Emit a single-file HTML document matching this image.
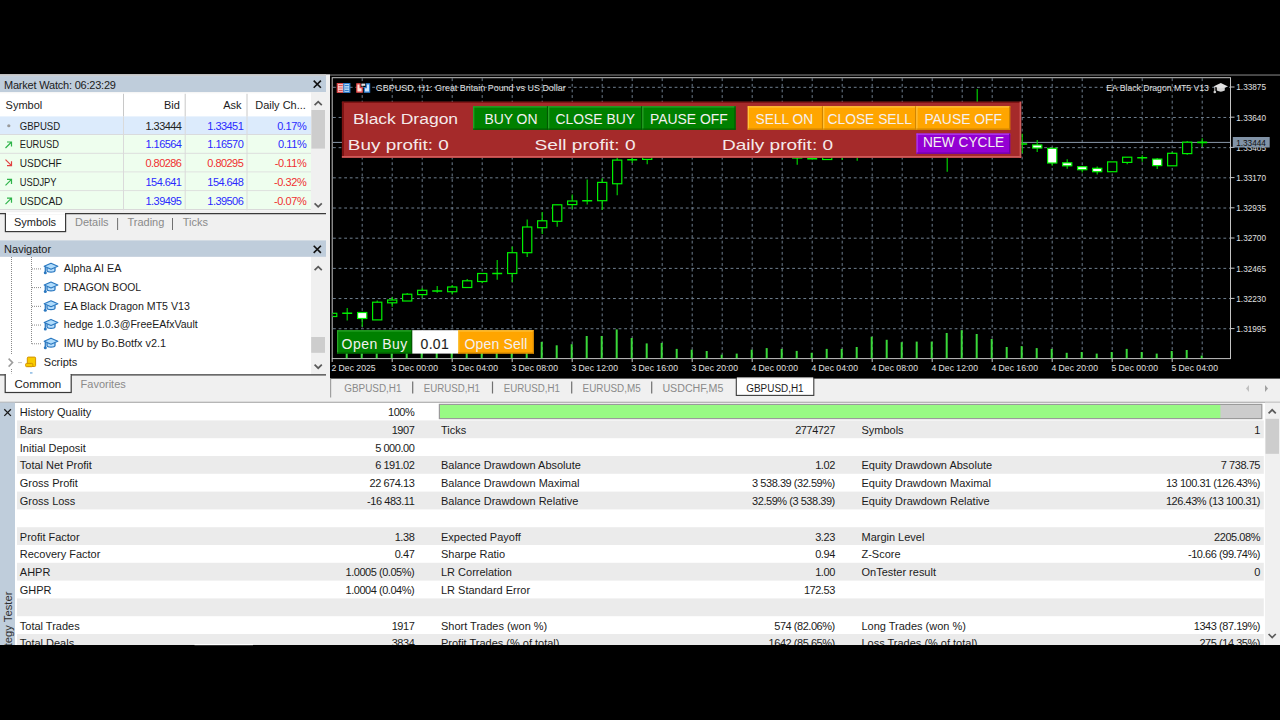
<!DOCTYPE html><html><head><meta charset="utf-8"><title>MT5</title><style>html,body{margin:0;padding:0;background:#000;overflow:hidden;width:1280px;height:720px}svg{display:block}</style></head><body>
<svg width="1280" height="720" viewBox="0 0 1280 720" font-family='"Liberation Sans", sans-serif' style="white-space:pre">
<rect x="0.00" y="0.00" width="1280.00" height="720.00" fill="#000" />
<rect x="0.00" y="74.30" width="330.00" height="326.70" fill="#f0f0f0" />
<rect x="0.00" y="74.30" width="326.00" height="1.80" fill="#c9cbcd" />
<rect x="0.00" y="76.10" width="326.00" height="15.90" fill="#bfcddb" />
<text transform="translate(4.00,88.60) scale(0.932,1)" x="0" y="0" font-size="11.8" fill="#202020" letter-spacing="-0.215" >Market Watch: 06:23:29</text>
<path d="M313.70,80.60 L320.90,87.80 M320.90,80.60 L313.70,87.80" stroke="#111111" stroke-width="1.6"/>
<rect x="0.00" y="92.00" width="311.00" height="118.30" fill="#ffffff" />
<rect x="0.00" y="92.00" width="326.00" height="1.30" fill="#f6f6f6" />
<text transform="translate(5.60,108.70) scale(0.932,1)" x="0" y="0" font-size="11.8" fill="#1b1b1b" >Symbol</text>
<text transform="translate(179.80,108.70) scale(0.932,1)" x="0" y="0" font-size="11.8" fill="#1b1b1b" text-anchor="end" >Bid</text>
<text transform="translate(241.60,108.70) scale(0.932,1)" x="0" y="0" font-size="11.8" fill="#1b1b1b" text-anchor="end" >Ask</text>
<text transform="translate(255.20,108.70) scale(0.932,1)" x="0" y="0" font-size="11.8" fill="#1b1b1b" >Daily Ch...</text>
<rect x="0.00" y="116.40" width="311.00" height="18.72" fill="#dcebfc" />
<line x1="0.00" y1="134.62" x2="311.00" y2="134.62" stroke="#d9d9d9" stroke-width="1" />
<text x="19.70" y="129.70" font-size="11.8" fill="#1b1b1b" textLength="40.5" lengthAdjust="spacingAndGlyphs" >GBPUSD</text>
<text transform="translate(181.40,129.70) scale(0.932,1)" x="0" y="0" font-size="11.8" fill="#222222" text-anchor="end" letter-spacing="-0.59" >1.33444</text>
<text transform="translate(243.20,129.70) scale(0.932,1)" x="0" y="0" font-size="11.8" fill="#2a2aff" text-anchor="end" letter-spacing="-0.59" >1.33451</text>
<text transform="translate(306.30,129.70) scale(0.932,1)" x="0" y="0" font-size="11.8" fill="#2a2aff" text-anchor="end" letter-spacing="-0.429" >0.17%</text>
<circle cx="8.8" cy="125.76" r="1.6" fill="#9a9a9a"/>
<rect x="0.00" y="135.12" width="311.00" height="18.72" fill="#eefeee" />
<line x1="0.00" y1="153.34" x2="311.00" y2="153.34" stroke="#d9d9d9" stroke-width="1" />
<text x="19.70" y="148.42" font-size="11.8" fill="#1b1b1b" textLength="39.3" lengthAdjust="spacingAndGlyphs" >EURUSD</text>
<text transform="translate(181.40,148.42) scale(0.932,1)" x="0" y="0" font-size="11.8" fill="#2a2aff" text-anchor="end" letter-spacing="-0.59" >1.16564</text>
<text transform="translate(243.20,148.42) scale(0.932,1)" x="0" y="0" font-size="11.8" fill="#2a2aff" text-anchor="end" letter-spacing="-0.59" >1.16570</text>
<text transform="translate(306.30,148.42) scale(0.932,1)" x="0" y="0" font-size="11.8" fill="#2a2aff" text-anchor="end" letter-spacing="-0.429" >0.11%</text>
<path d="M5.5,147.98 L11.5,141.98 M7,141.98 L11.5,141.98 L11.5,146.48" fill="none" stroke="#2fb44a" stroke-width="1.2"/>
<rect x="0.00" y="153.84" width="311.00" height="18.72" fill="#eefeee" />
<line x1="0.00" y1="172.06" x2="311.00" y2="172.06" stroke="#d9d9d9" stroke-width="1" />
<text x="19.70" y="167.14" font-size="11.8" fill="#1b1b1b" textLength="42" lengthAdjust="spacingAndGlyphs" >USDCHF</text>
<text transform="translate(181.40,167.14) scale(0.932,1)" x="0" y="0" font-size="11.8" fill="#f03030" text-anchor="end" letter-spacing="-0.59" >0.80286</text>
<text transform="translate(243.20,167.14) scale(0.932,1)" x="0" y="0" font-size="11.8" fill="#f03030" text-anchor="end" letter-spacing="-0.59" >0.80295</text>
<text transform="translate(306.30,167.14) scale(0.932,1)" x="0" y="0" font-size="11.8" fill="#f03030" text-anchor="end" letter-spacing="-0.429" >-0.11%</text>
<path d="M5.5,159.70 L11.5,165.70 M7,165.70 L11.5,165.70 L11.5,161.20" fill="none" stroke="#e04040" stroke-width="1.2"/>
<rect x="0.00" y="172.56" width="311.00" height="18.72" fill="#eefeee" />
<line x1="0.00" y1="190.78" x2="311.00" y2="190.78" stroke="#d9d9d9" stroke-width="1" />
<text x="19.70" y="185.86" font-size="11.8" fill="#1b1b1b" textLength="36.8" lengthAdjust="spacingAndGlyphs" >USDJPY</text>
<text transform="translate(181.40,185.86) scale(0.932,1)" x="0" y="0" font-size="11.8" fill="#2a2aff" text-anchor="end" letter-spacing="-0.59" >154.641</text>
<text transform="translate(243.20,185.86) scale(0.932,1)" x="0" y="0" font-size="11.8" fill="#2a2aff" text-anchor="end" letter-spacing="-0.59" >154.648</text>
<text transform="translate(306.30,185.86) scale(0.932,1)" x="0" y="0" font-size="11.8" fill="#f03030" text-anchor="end" letter-spacing="-0.429" >-0.32%</text>
<path d="M5.5,185.42 L11.5,179.42 M7,179.42 L11.5,179.42 L11.5,183.92" fill="none" stroke="#2fb44a" stroke-width="1.2"/>
<rect x="0.00" y="191.28" width="311.00" height="18.72" fill="#eefeee" />
<line x1="0.00" y1="209.50" x2="311.00" y2="209.50" stroke="#d9d9d9" stroke-width="1" />
<text x="19.70" y="204.58" font-size="11.8" fill="#1b1b1b" textLength="42.8" lengthAdjust="spacingAndGlyphs" >USDCAD</text>
<text transform="translate(181.40,204.58) scale(0.932,1)" x="0" y="0" font-size="11.8" fill="#2a2aff" text-anchor="end" letter-spacing="-0.59" >1.39495</text>
<text transform="translate(243.20,204.58) scale(0.932,1)" x="0" y="0" font-size="11.8" fill="#2a2aff" text-anchor="end" letter-spacing="-0.59" >1.39506</text>
<text transform="translate(306.30,204.58) scale(0.932,1)" x="0" y="0" font-size="11.8" fill="#f03030" text-anchor="end" letter-spacing="-0.429" >-0.07%</text>
<path d="M5.5,204.14 L11.5,198.14 M7,198.14 L11.5,198.14 L11.5,202.64" fill="none" stroke="#2fb44a" stroke-width="1.2"/>
<line x1="123.50" y1="93.80" x2="123.50" y2="116.40" stroke="#c8c8c8" stroke-width="1" />
<line x1="123.50" y1="116.40" x2="123.50" y2="210.30" stroke="#dadada" stroke-width="1" />
<line x1="185.20" y1="93.80" x2="185.20" y2="116.40" stroke="#c8c8c8" stroke-width="1" />
<line x1="185.20" y1="116.40" x2="185.20" y2="210.30" stroke="#dadada" stroke-width="1" />
<line x1="247.00" y1="93.80" x2="247.00" y2="116.40" stroke="#c8c8c8" stroke-width="1" />
<line x1="247.00" y1="116.40" x2="247.00" y2="210.30" stroke="#dadada" stroke-width="1" />
<rect x="311.00" y="92.00" width="15.00" height="118.30" fill="#f0f0f0" />
<rect x="311.40" y="110.00" width="13.60" height="38.60" fill="#cdcdcd" />
<path d="M314.60,105.20 L318.20,101.60 L321.80,105.20" fill="none" stroke="#5a5a5a" stroke-width="1.7"/>
<path d="M314.60,203.30 L318.20,206.90 L321.80,203.30" fill="none" stroke="#5a5a5a" stroke-width="1.7"/>
<line x1="0.00" y1="213.60" x2="326.00" y2="213.60" stroke="#3a3a3a" stroke-width="1.2" />
<rect x="5.40" y="213.60" width="60.20" height="18.00" fill="#ffffff" stroke="#3a3a3a" stroke-width="1.2"/>
<rect x="6.00" y="212.20" width="59.00" height="2.60" fill="#ffffff" />
<text transform="translate(14.00,226.10) scale(0.932,1)" x="0" y="0" font-size="11.8" fill="#1b1b1b" >Symbols</text>
<text transform="translate(75.00,226.10) scale(0.932,1)" x="0" y="0" font-size="11.8" fill="#8a8a8a" >Details</text>
<text transform="translate(127.50,226.10) scale(0.932,1)" x="0" y="0" font-size="11.8" fill="#8a8a8a" >Trading</text>
<text transform="translate(182.80,226.10) scale(0.932,1)" x="0" y="0" font-size="11.8" fill="#8a8a8a" >Ticks</text>
<line x1="117.60" y1="218.00" x2="117.60" y2="230.00" stroke="#707070" stroke-width="1" />
<line x1="172.50" y1="218.00" x2="172.50" y2="230.00" stroke="#707070" stroke-width="1" />
<rect x="0.00" y="240.40" width="326.00" height="16.50" fill="#bfcddb" />
<text transform="translate(4.10,252.90) scale(0.932,1)" x="0" y="0" font-size="11.8" fill="#202020" >Navigator</text>
<path d="M313.70,245.70 L320.90,252.90 M320.90,245.70 L313.70,252.90" stroke="#111111" stroke-width="1.6"/>
<rect x="0.00" y="256.90" width="311.00" height="117.70" fill="#ffffff" />
<rect x="311.00" y="256.90" width="15.00" height="117.70" fill="#f0f0f0" />
<rect x="311.20" y="337.00" width="13.80" height="15.80" fill="#cdcdcd" />
<path d="M314.60,270.20 L318.20,266.60 L321.80,270.20" fill="none" stroke="#5a5a5a" stroke-width="1.7"/>
<path d="M314.60,364.60 L318.20,368.20 L321.80,364.60" fill="none" stroke="#5a5a5a" stroke-width="1.7"/>
<g stroke="#8a8a8a" stroke-width="1" stroke-dasharray="1 1">
<line x1="11.50" y1="257.00" x2="11.50" y2="354.00" />
<line x1="11.50" y1="369.00" x2="11.50" y2="374.50" />
<line x1="31.50" y1="257.00" x2="31.50" y2="343.80" />
<line x1="32.00" y1="268.90" x2="41.50" y2="268.90" />
<line x1="32.00" y1="287.62" x2="41.50" y2="287.62" />
<line x1="32.00" y1="306.34" x2="41.50" y2="306.34" />
<line x1="32.00" y1="325.06" x2="41.50" y2="325.06" />
<line x1="32.00" y1="343.78" x2="41.50" y2="343.78" />
<line x1="18.50" y1="362.60" x2="22.50" y2="362.60" />
</g>
<g transform="translate(51,268.90)"><path d="M-4,-1.2 L-4,1.6 Q-4,3.3 0,3.3 Q4,3.3 4,1.6 L4,-1.2" fill="#b8defc" stroke="#2a78c0" stroke-width="1.3"/><path d="M-6.8,-2.6 L0,-5.6 L6.8,-2.6 L0,0.4 Z" fill="#b0dcfc" stroke="#2a78c0" stroke-width="1.2" stroke-linejoin="round"/><path d="M-5.7,-2.4 L-5.7,3.4" stroke="#2a78c0" stroke-width="1.3"/><circle cx="-5.7" cy="3.9" r="1.5" fill="#2a78c0"/></g>
<text x="63.80" y="272.30" font-size="11.8" fill="#1b1b1b" textLength="57.7" lengthAdjust="spacingAndGlyphs" >Alpha AI EA</text>
<g transform="translate(51,287.62)"><path d="M-4,-1.2 L-4,1.6 Q-4,3.3 0,3.3 Q4,3.3 4,1.6 L4,-1.2" fill="#b8defc" stroke="#2a78c0" stroke-width="1.3"/><path d="M-6.8,-2.6 L0,-5.6 L6.8,-2.6 L0,0.4 Z" fill="#b0dcfc" stroke="#2a78c0" stroke-width="1.2" stroke-linejoin="round"/><path d="M-5.7,-2.4 L-5.7,3.4" stroke="#2a78c0" stroke-width="1.3"/><circle cx="-5.7" cy="3.9" r="1.5" fill="#2a78c0"/></g>
<text x="63.80" y="291.02" font-size="11.8" fill="#1b1b1b" textLength="77.3" lengthAdjust="spacingAndGlyphs" >DRAGON BOOL</text>
<g transform="translate(51,306.34)"><path d="M-4,-1.2 L-4,1.6 Q-4,3.3 0,3.3 Q4,3.3 4,1.6 L4,-1.2" fill="#b8defc" stroke="#2a78c0" stroke-width="1.3"/><path d="M-6.8,-2.6 L0,-5.6 L6.8,-2.6 L0,0.4 Z" fill="#b0dcfc" stroke="#2a78c0" stroke-width="1.2" stroke-linejoin="round"/><path d="M-5.7,-2.4 L-5.7,3.4" stroke="#2a78c0" stroke-width="1.3"/><circle cx="-5.7" cy="3.9" r="1.5" fill="#2a78c0"/></g>
<text x="63.80" y="309.74" font-size="11.8" fill="#1b1b1b" textLength="126" lengthAdjust="spacingAndGlyphs" >EA Black Dragon MT5 V13</text>
<g transform="translate(51,325.06)"><path d="M-4,-1.2 L-4,1.6 Q-4,3.3 0,3.3 Q4,3.3 4,1.6 L4,-1.2" fill="#b8defc" stroke="#2a78c0" stroke-width="1.3"/><path d="M-6.8,-2.6 L0,-5.6 L6.8,-2.6 L0,0.4 Z" fill="#b0dcfc" stroke="#2a78c0" stroke-width="1.2" stroke-linejoin="round"/><path d="M-5.7,-2.4 L-5.7,3.4" stroke="#2a78c0" stroke-width="1.3"/><circle cx="-5.7" cy="3.9" r="1.5" fill="#2a78c0"/></g>
<text x="63.80" y="328.46" font-size="11.8" fill="#1b1b1b" textLength="134" lengthAdjust="spacingAndGlyphs" >hedge 1.0.3@FreeEAfxVault</text>
<g transform="translate(51,343.78)"><path d="M-4,-1.2 L-4,1.6 Q-4,3.3 0,3.3 Q4,3.3 4,1.6 L4,-1.2" fill="#b8defc" stroke="#2a78c0" stroke-width="1.3"/><path d="M-6.8,-2.6 L0,-5.6 L6.8,-2.6 L0,0.4 Z" fill="#b0dcfc" stroke="#2a78c0" stroke-width="1.2" stroke-linejoin="round"/><path d="M-5.7,-2.4 L-5.7,3.4" stroke="#2a78c0" stroke-width="1.3"/><circle cx="-5.7" cy="3.9" r="1.5" fill="#2a78c0"/></g>
<text x="63.80" y="347.18" font-size="11.8" fill="#1b1b1b" textLength="102.3" lengthAdjust="spacingAndGlyphs" >IMU by Bo.Botfx v2.1</text>
<path d="M8.6,358.6 L12.6,362.6 L8.6,366.6" fill="none" stroke="#9c9c9c" stroke-width="1.5"/>
<rect x="27.3" y="357.1" width="8.3" height="9.4" rx="1" fill="#f8cc00" stroke="#d39200" stroke-width="1"/>
<rect x="25.6" y="363.4" width="7.2" height="3.3" rx="1" fill="#f8cc00" stroke="#d39200" stroke-width="1"/>
<text transform="translate(43.80,365.90) scale(0.932,1)" x="0" y="0" font-size="11.8" fill="#1b1b1b" >Scripts</text>
<rect x="30.00" y="372.50" width="2.50" height="1.50" fill="#3a8ad0" />
<line x1="0.00" y1="374.80" x2="326.00" y2="374.80" stroke="#3a3a3a" stroke-width="1.2" />
<rect x="5.20" y="374.80" width="66.00" height="17.70" fill="#ffffff" stroke="#3a3a3a" stroke-width="1.2"/>
<rect x="5.90" y="373.40" width="64.60" height="2.60" fill="#ffffff" />
<text x="14.40" y="387.50" font-size="11.8" fill="#1b1b1b" textLength="46.9" lengthAdjust="spacingAndGlyphs" >Common</text>
<text transform="translate(80.60,387.50) scale(0.932,1)" x="0" y="0" font-size="11.8" fill="#8a8a8a" >Favorites</text>
<rect x="330.00" y="75.30" width="950.00" height="303.30" fill="#000000" />
<rect x="330.00" y="74.10" width="950.00" height="1.90" fill="#4a4a4a" />
<g stroke="#6f7f8f" stroke-width="1" stroke-dasharray="2.8 2.8">
<line x1="362.20" y1="78.30" x2="362.20" y2="358.30" />
<line x1="392.20" y1="78.30" x2="392.20" y2="358.30" />
<line x1="422.20" y1="78.30" x2="422.20" y2="358.30" />
<line x1="452.20" y1="78.30" x2="452.20" y2="358.30" />
<line x1="482.20" y1="78.30" x2="482.20" y2="358.30" />
<line x1="512.20" y1="78.30" x2="512.20" y2="358.30" />
<line x1="542.20" y1="78.30" x2="542.20" y2="358.30" />
<line x1="572.20" y1="78.30" x2="572.20" y2="358.30" />
<line x1="602.20" y1="78.30" x2="602.20" y2="358.30" />
<line x1="632.20" y1="78.30" x2="632.20" y2="358.30" />
<line x1="662.20" y1="78.30" x2="662.20" y2="358.30" />
<line x1="692.20" y1="78.30" x2="692.20" y2="358.30" />
<line x1="722.20" y1="78.30" x2="722.20" y2="358.30" />
<line x1="752.20" y1="78.30" x2="752.20" y2="358.30" />
<line x1="782.20" y1="78.30" x2="782.20" y2="358.30" />
<line x1="812.20" y1="78.30" x2="812.20" y2="358.30" />
<line x1="842.20" y1="78.30" x2="842.20" y2="358.30" />
<line x1="872.20" y1="78.30" x2="872.20" y2="358.30" />
<line x1="902.20" y1="78.30" x2="902.20" y2="358.30" />
<line x1="932.20" y1="78.30" x2="932.20" y2="358.30" />
<line x1="962.20" y1="78.30" x2="962.20" y2="358.30" />
<line x1="992.20" y1="78.30" x2="992.20" y2="358.30" />
<line x1="1022.20" y1="78.30" x2="1022.20" y2="358.30" />
<line x1="1052.20" y1="78.30" x2="1052.20" y2="358.30" />
<line x1="1082.20" y1="78.30" x2="1082.20" y2="358.30" />
<line x1="1112.20" y1="78.30" x2="1112.20" y2="358.30" />
<line x1="1142.20" y1="78.30" x2="1142.20" y2="358.30" />
<line x1="1172.20" y1="78.30" x2="1172.20" y2="358.30" />
<line x1="1202.20" y1="78.30" x2="1202.20" y2="358.30" />
<line x1="333.00" y1="87.30" x2="1230.00" y2="87.30" />
<line x1="333.00" y1="117.48" x2="1230.00" y2="117.48" />
<line x1="333.00" y1="147.66" x2="1230.00" y2="147.66" />
<line x1="333.00" y1="177.84" x2="1230.00" y2="177.84" />
<line x1="333.00" y1="208.02" x2="1230.00" y2="208.02" />
<line x1="333.00" y1="238.20" x2="1230.00" y2="238.20" />
<line x1="333.00" y1="268.38" x2="1230.00" y2="268.38" />
<line x1="333.00" y1="298.56" x2="1230.00" y2="298.56" />
<line x1="333.00" y1="328.74" x2="1230.00" y2="328.74" />
</g>
<line x1="333.00" y1="142.40" x2="1230.50" y2="142.40" stroke="#8a9aac" stroke-width="1" />
<rect x="332.2" y="77.7" width="898.3" height="280.9" fill="none" stroke="#c4c4c4" stroke-width="1"/>
<rect x="345.70" y="350.00" width="2.00" height="8.20" fill="#3ad83a" />
<rect x="360.70" y="350.00" width="2.00" height="8.20" fill="#3ad83a" />
<rect x="375.70" y="350.00" width="2.00" height="8.20" fill="#3ad83a" />
<rect x="390.70" y="350.00" width="2.00" height="8.20" fill="#3ad83a" />
<rect x="405.70" y="350.00" width="2.00" height="8.20" fill="#3ad83a" />
<rect x="420.70" y="350.00" width="2.00" height="8.20" fill="#3ad83a" />
<rect x="435.70" y="350.00" width="2.00" height="8.20" fill="#3ad83a" />
<rect x="450.70" y="350.00" width="2.00" height="8.20" fill="#3ad83a" />
<rect x="465.70" y="350.00" width="2.00" height="8.20" fill="#3ad83a" />
<rect x="480.70" y="350.00" width="2.00" height="8.20" fill="#3ad83a" />
<rect x="495.70" y="350.00" width="2.00" height="8.20" fill="#3ad83a" />
<rect x="510.70" y="350.00" width="2.00" height="8.20" fill="#3ad83a" />
<rect x="525.70" y="350.00" width="2.00" height="8.20" fill="#3ad83a" />
<rect x="540.70" y="341.90" width="2.00" height="16.30" fill="#3ad83a" />
<rect x="555.70" y="345.30" width="2.00" height="12.90" fill="#3ad83a" />
<rect x="570.70" y="344.20" width="2.00" height="14.00" fill="#3ad83a" />
<rect x="585.70" y="336.00" width="2.00" height="22.20" fill="#3ad83a" />
<rect x="600.70" y="336.00" width="2.00" height="22.20" fill="#3ad83a" />
<rect x="615.70" y="329.40" width="2.00" height="28.80" fill="#3ad83a" />
<rect x="630.70" y="338.00" width="2.00" height="20.20" fill="#3ad83a" />
<rect x="645.70" y="343.40" width="2.00" height="14.80" fill="#3ad83a" />
<rect x="660.70" y="343.00" width="2.00" height="15.20" fill="#3ad83a" />
<rect x="675.70" y="348.90" width="2.00" height="9.30" fill="#3ad83a" />
<rect x="690.70" y="349.70" width="2.00" height="8.50" fill="#3ad83a" />
<rect x="705.70" y="351.00" width="2.00" height="7.20" fill="#3ad83a" />
<rect x="720.70" y="354.70" width="2.00" height="3.50" fill="#3ad83a" />
<rect x="735.70" y="353.60" width="2.00" height="4.60" fill="#3ad83a" />
<rect x="750.70" y="349.70" width="2.00" height="8.50" fill="#3ad83a" />
<rect x="765.70" y="348.10" width="2.00" height="10.10" fill="#3ad83a" />
<rect x="780.70" y="348.90" width="2.00" height="9.30" fill="#3ad83a" />
<rect x="795.70" y="350.90" width="2.00" height="7.30" fill="#3ad83a" />
<rect x="810.70" y="352.80" width="2.00" height="5.40" fill="#3ad83a" />
<rect x="825.70" y="348.90" width="2.00" height="9.30" fill="#3ad83a" />
<rect x="840.70" y="348.90" width="2.00" height="9.30" fill="#3ad83a" />
<rect x="855.70" y="347.00" width="2.00" height="11.20" fill="#3ad83a" />
<rect x="870.70" y="336.70" width="2.00" height="21.50" fill="#3ad83a" />
<rect x="885.70" y="339.80" width="2.00" height="18.40" fill="#3ad83a" />
<rect x="900.70" y="342.20" width="2.00" height="16.00" fill="#3ad83a" />
<rect x="915.70" y="341.60" width="2.00" height="16.60" fill="#3ad83a" />
<rect x="930.70" y="341.60" width="2.00" height="16.60" fill="#3ad83a" />
<rect x="945.70" y="333.00" width="2.00" height="25.20" fill="#3ad83a" />
<rect x="960.70" y="330.20" width="2.00" height="28.00" fill="#3ad83a" />
<rect x="975.70" y="334.00" width="2.00" height="24.20" fill="#3ad83a" />
<rect x="990.70" y="339.00" width="2.00" height="19.20" fill="#3ad83a" />
<rect x="1005.70" y="347.00" width="2.00" height="11.20" fill="#3ad83a" />
<rect x="1020.70" y="346.10" width="2.00" height="12.10" fill="#3ad83a" />
<rect x="1035.70" y="348.10" width="2.00" height="10.10" fill="#3ad83a" />
<rect x="1050.70" y="348.90" width="2.00" height="9.30" fill="#3ad83a" />
<rect x="1065.70" y="352.80" width="2.00" height="5.40" fill="#3ad83a" />
<rect x="1080.70" y="352.00" width="2.00" height="6.20" fill="#3ad83a" />
<rect x="1095.70" y="353.60" width="2.00" height="4.60" fill="#3ad83a" />
<rect x="1110.70" y="352.00" width="2.00" height="6.20" fill="#3ad83a" />
<rect x="1125.70" y="348.90" width="2.00" height="9.30" fill="#3ad83a" />
<rect x="1140.70" y="352.00" width="2.00" height="6.20" fill="#3ad83a" />
<rect x="1155.70" y="353.60" width="2.00" height="4.60" fill="#3ad83a" />
<rect x="1170.70" y="351.00" width="2.00" height="7.20" fill="#3ad83a" />
<rect x="1185.70" y="350.00" width="2.00" height="8.20" fill="#3ad83a" />
<rect x="1200.70" y="355.60" width="2.00" height="2.60" fill="#3ad83a" />
<defs><clipPath id="cc"><rect x="332.7" y="78.2" width="897.3" height="280"/></clipPath></defs><g clip-path="url(#cc)">
<line x1="332.20" y1="313.30" x2="332.20" y2="316.50" stroke="#00e000" stroke-width="1.1" />
<rect x="327.60" y="313.30" width="9.2" height="3.20" fill="#000" stroke="#00f000" stroke-width="1.2"/>
<line x1="347.20" y1="308.00" x2="347.20" y2="320.50" stroke="#00e000" stroke-width="1.1" />
<line x1="342.20" y1="313.30" x2="352.20" y2="313.30" stroke="#00f000" stroke-width="1.6" />
<line x1="362.20" y1="312.00" x2="362.20" y2="326.80" stroke="#00e000" stroke-width="1.1" />
<rect x="357.60" y="312.50" width="9.2" height="6.00" fill="#fff" stroke="#00f000" stroke-width="1.2"/>
<line x1="377.20" y1="300.40" x2="377.20" y2="319.90" stroke="#00e000" stroke-width="1.1" />
<rect x="372.60" y="302.20" width="9.2" height="17.70" fill="#000" stroke="#00f000" stroke-width="1.2"/>
<line x1="392.20" y1="297.00" x2="392.20" y2="306.70" stroke="#00e000" stroke-width="1.1" />
<rect x="387.60" y="300.00" width="9.2" height="2.80" fill="#000" stroke="#00f000" stroke-width="1.2"/>
<line x1="407.20" y1="293.00" x2="407.20" y2="301.00" stroke="#00e000" stroke-width="1.1" />
<rect x="402.60" y="294.20" width="9.2" height="6.80" fill="#000" stroke="#00f000" stroke-width="1.2"/>
<line x1="422.20" y1="288.00" x2="422.20" y2="297.60" stroke="#00e000" stroke-width="1.1" />
<rect x="417.60" y="290.30" width="9.2" height="4.30" fill="#000" stroke="#00f000" stroke-width="1.2"/>
<line x1="437.20" y1="286.00" x2="437.20" y2="292.80" stroke="#00e000" stroke-width="1.1" />
<line x1="432.20" y1="291.00" x2="442.20" y2="291.00" stroke="#00f000" stroke-width="1.6" />
<line x1="452.20" y1="285.00" x2="452.20" y2="294.40" stroke="#00e000" stroke-width="1.1" />
<rect x="447.60" y="287.00" width="9.2" height="4.70" fill="#000" stroke="#00f000" stroke-width="1.2"/>
<line x1="467.20" y1="279.00" x2="467.20" y2="287.50" stroke="#00e000" stroke-width="1.1" />
<rect x="462.60" y="280.80" width="9.2" height="6.70" fill="#000" stroke="#00f000" stroke-width="1.2"/>
<line x1="482.20" y1="273.50" x2="482.20" y2="283.30" stroke="#00e000" stroke-width="1.1" />
<rect x="477.60" y="273.50" width="9.2" height="8.00" fill="#000" stroke="#00f000" stroke-width="1.2"/>
<line x1="497.20" y1="260.00" x2="497.20" y2="279.80" stroke="#00e000" stroke-width="1.1" />
<line x1="492.20" y1="273.50" x2="502.20" y2="273.50" stroke="#00f000" stroke-width="1.6" />
<line x1="512.20" y1="246.50" x2="512.20" y2="281.90" stroke="#00e000" stroke-width="1.1" />
<rect x="507.60" y="252.70" width="9.2" height="20.80" fill="#000" stroke="#00f000" stroke-width="1.2"/>
<line x1="527.20" y1="219.40" x2="527.20" y2="256.90" stroke="#00e000" stroke-width="1.1" />
<rect x="522.60" y="227.00" width="9.2" height="25.70" fill="#000" stroke="#00f000" stroke-width="1.2"/>
<line x1="542.20" y1="212.00" x2="542.20" y2="234.00" stroke="#00e000" stroke-width="1.1" />
<rect x="537.60" y="220.80" width="9.2" height="6.90" fill="#000" stroke="#00f000" stroke-width="1.2"/>
<line x1="557.20" y1="204.80" x2="557.20" y2="226.80" stroke="#00e000" stroke-width="1.1" />
<rect x="552.60" y="204.80" width="9.2" height="16.50" fill="#000" stroke="#00f000" stroke-width="1.2"/>
<line x1="572.20" y1="194.40" x2="572.20" y2="208.75" stroke="#00e000" stroke-width="1.1" />
<rect x="567.60" y="201.00" width="9.2" height="3.60" fill="#000" stroke="#00f000" stroke-width="1.2"/>
<line x1="587.20" y1="179.60" x2="587.20" y2="204.60" stroke="#00e000" stroke-width="1.1" />
<line x1="582.20" y1="200.80" x2="592.20" y2="200.80" stroke="#00f000" stroke-width="1.6" />
<line x1="602.20" y1="178.20" x2="602.20" y2="210.10" stroke="#00e000" stroke-width="1.1" />
<rect x="597.60" y="182.40" width="9.2" height="18.30" fill="#000" stroke="#00f000" stroke-width="1.2"/>
<line x1="617.20" y1="150.00" x2="617.20" y2="195.30" stroke="#00e000" stroke-width="1.1" />
<rect x="612.60" y="160.10" width="9.2" height="23.65" fill="#000" stroke="#00f000" stroke-width="1.2"/>
<line x1="632.20" y1="140.00" x2="632.20" y2="162.90" stroke="#00e000" stroke-width="1.1" />
<line x1="627.20" y1="159.70" x2="637.20" y2="159.70" stroke="#00f000" stroke-width="1.6" />
<line x1="647.20" y1="130.00" x2="647.20" y2="164.30" stroke="#00e000" stroke-width="1.1" />
<rect x="642.60" y="140.00" width="9.2" height="19.40" fill="#000" stroke="#00f000" stroke-width="1.2"/>
<line x1="797.20" y1="145.00" x2="797.20" y2="164.80" stroke="#00e000" stroke-width="1.1" />
<rect x="792.60" y="150.00" width="9.2" height="8.00" fill="#000" stroke="#00f000" stroke-width="1.2"/>
<line x1="812.20" y1="150.00" x2="812.20" y2="158.70" stroke="#00e000" stroke-width="1.1" />
<line x1="807.20" y1="158.70" x2="817.20" y2="158.70" stroke="#00f000" stroke-width="1.6" />
<line x1="827.20" y1="145.00" x2="827.20" y2="159.50" stroke="#00e000" stroke-width="1.1" />
<rect x="822.60" y="150.00" width="9.2" height="9.50" fill="#000" stroke="#00f000" stroke-width="1.2"/>
<line x1="842.20" y1="130.00" x2="842.20" y2="160.00" stroke="#00e000" stroke-width="1.1" />
<rect x="837.60" y="140.00" width="9.2" height="10.00" fill="#000" stroke="#00f000" stroke-width="1.2"/>
<line x1="857.20" y1="130.00" x2="857.20" y2="160.70" stroke="#00e000" stroke-width="1.1" />
<rect x="852.60" y="140.00" width="9.2" height="10.00" fill="#000" stroke="#00f000" stroke-width="1.2"/>
<line x1="947.20" y1="120.00" x2="947.20" y2="171.70" stroke="#00e000" stroke-width="1.1" />
<rect x="942.60" y="130.00" width="9.2" height="10.00" fill="#000" stroke="#00f000" stroke-width="1.2"/>
<line x1="977.20" y1="89.00" x2="977.20" y2="135.00" stroke="#00e000" stroke-width="1.1" />
<rect x="972.60" y="110.00" width="9.2" height="20.00" fill="#000" stroke="#00f000" stroke-width="1.2"/>
<line x1="1022.20" y1="133.70" x2="1022.20" y2="153.30" stroke="#00e000" stroke-width="1.1" />
<line x1="1017.20" y1="144.00" x2="1027.20" y2="144.00" stroke="#00f000" stroke-width="1.6" />
<line x1="1037.20" y1="140.00" x2="1037.20" y2="152.00" stroke="#00e000" stroke-width="1.1" />
<rect x="1032.60" y="145.00" width="9.2" height="3.00" fill="#fff" stroke="#00f000" stroke-width="1.2"/>
<line x1="1052.20" y1="148.00" x2="1052.20" y2="165.80" stroke="#00e000" stroke-width="1.1" />
<rect x="1047.60" y="148.30" width="9.2" height="14.70" fill="#fff" stroke="#00f000" stroke-width="1.2"/>
<line x1="1067.20" y1="159.20" x2="1067.20" y2="168.70" stroke="#00e000" stroke-width="1.1" />
<rect x="1062.60" y="162.80" width="9.2" height="3.00" fill="#fff" stroke="#00f000" stroke-width="1.2"/>
<line x1="1082.20" y1="166.00" x2="1082.20" y2="172.50" stroke="#00e000" stroke-width="1.1" />
<rect x="1077.60" y="166.70" width="9.2" height="3.00" fill="#fff" stroke="#00f000" stroke-width="1.2"/>
<line x1="1097.20" y1="166.40" x2="1097.20" y2="174.40" stroke="#00e000" stroke-width="1.1" />
<rect x="1092.60" y="168.30" width="9.2" height="3.40" fill="#fff" stroke="#00f000" stroke-width="1.2"/>
<line x1="1112.20" y1="161.90" x2="1112.20" y2="171.70" stroke="#00e000" stroke-width="1.1" />
<rect x="1107.60" y="161.90" width="9.2" height="9.80" fill="#000" stroke="#00f000" stroke-width="1.2"/>
<line x1="1127.20" y1="157.00" x2="1127.20" y2="164.20" stroke="#00e000" stroke-width="1.1" />
<rect x="1122.60" y="157.20" width="9.2" height="5.20" fill="#000" stroke="#00f000" stroke-width="1.2"/>
<line x1="1142.20" y1="155.30" x2="1142.20" y2="161.70" stroke="#00e000" stroke-width="1.1" />
<line x1="1137.20" y1="157.80" x2="1147.20" y2="157.80" stroke="#00f000" stroke-width="1.6" />
<line x1="1157.20" y1="158.00" x2="1157.20" y2="168.90" stroke="#00e000" stroke-width="1.1" />
<rect x="1152.60" y="159.10" width="9.2" height="6.50" fill="#fff" stroke="#00f000" stroke-width="1.2"/>
<line x1="1172.20" y1="152.20" x2="1172.20" y2="165.80" stroke="#00e000" stroke-width="1.1" />
<rect x="1167.60" y="153.30" width="9.2" height="12.50" fill="#000" stroke="#00f000" stroke-width="1.2"/>
<line x1="1187.20" y1="141.10" x2="1187.20" y2="154.70" stroke="#00e000" stroke-width="1.1" />
<rect x="1182.60" y="142.20" width="9.2" height="11.40" fill="#000" stroke="#00f000" stroke-width="1.2"/>
<line x1="1202.20" y1="138.30" x2="1202.20" y2="146.70" stroke="#00e000" stroke-width="1.1" />
<line x1="1197.20" y1="142.40" x2="1207.20" y2="142.40" stroke="#00f000" stroke-width="1.6" />
</g>
<line x1="1230.50" y1="87.00" x2="1234.50" y2="87.00" stroke="#c4c4c4" stroke-width="1" />
<text transform="translate(1236.30,90.40) scale(0.885,1)" x="0" y="0" font-size="9.3" fill="#e0e0e0" >1.33875</text>
<line x1="1230.50" y1="117.20" x2="1234.50" y2="117.20" stroke="#c4c4c4" stroke-width="1" />
<text transform="translate(1236.30,120.60) scale(0.885,1)" x="0" y="0" font-size="9.3" fill="#e0e0e0" >1.33640</text>
<line x1="1230.50" y1="147.40" x2="1234.50" y2="147.40" stroke="#c4c4c4" stroke-width="1" />
<text transform="translate(1236.30,150.80) scale(0.885,1)" x="0" y="0" font-size="9.3" fill="#e0e0e0" >1.33405</text>
<line x1="1230.50" y1="177.60" x2="1234.50" y2="177.60" stroke="#c4c4c4" stroke-width="1" />
<text transform="translate(1236.30,181.00) scale(0.885,1)" x="0" y="0" font-size="9.3" fill="#e0e0e0" >1.33170</text>
<line x1="1230.50" y1="207.80" x2="1234.50" y2="207.80" stroke="#c4c4c4" stroke-width="1" />
<text transform="translate(1236.30,211.20) scale(0.885,1)" x="0" y="0" font-size="9.3" fill="#e0e0e0" >1.32935</text>
<line x1="1230.50" y1="238.00" x2="1234.50" y2="238.00" stroke="#c4c4c4" stroke-width="1" />
<text transform="translate(1236.30,241.40) scale(0.885,1)" x="0" y="0" font-size="9.3" fill="#e0e0e0" >1.32700</text>
<line x1="1230.50" y1="268.20" x2="1234.50" y2="268.20" stroke="#c4c4c4" stroke-width="1" />
<text transform="translate(1236.30,271.60) scale(0.885,1)" x="0" y="0" font-size="9.3" fill="#e0e0e0" >1.32465</text>
<line x1="1230.50" y1="298.40" x2="1234.50" y2="298.40" stroke="#c4c4c4" stroke-width="1" />
<text transform="translate(1236.30,301.80) scale(0.885,1)" x="0" y="0" font-size="9.3" fill="#e0e0e0" >1.32230</text>
<line x1="1230.50" y1="328.60" x2="1234.50" y2="328.60" stroke="#c4c4c4" stroke-width="1" />
<text transform="translate(1236.30,332.00) scale(0.885,1)" x="0" y="0" font-size="9.3" fill="#e0e0e0" >1.31995</text>
<rect x="1232.80" y="137.00" width="36.90" height="10.50" fill="#8193a7" />
<text transform="translate(1236.20,145.90) scale(0.885,1)" x="0" y="0" font-size="9.3" fill="#101010" >1.33444</text>
<line x1="332.20" y1="358.50" x2="332.20" y2="362.00" stroke="#c4c4c4" stroke-width="1" />
<text transform="translate(331.40,370.80) scale(0.92,1)" x="0" y="0" font-size="9.4" fill="#e0e0e0" >2 Dec 2025</text>
<line x1="392.20" y1="358.50" x2="392.20" y2="362.00" stroke="#c4c4c4" stroke-width="1" />
<text transform="translate(391.40,370.80) scale(0.92,1)" x="0" y="0" font-size="9.4" fill="#e0e0e0" >3 Dec 00:00</text>
<line x1="452.20" y1="358.50" x2="452.20" y2="362.00" stroke="#c4c4c4" stroke-width="1" />
<text transform="translate(451.40,370.80) scale(0.92,1)" x="0" y="0" font-size="9.4" fill="#e0e0e0" >3 Dec 04:00</text>
<line x1="512.20" y1="358.50" x2="512.20" y2="362.00" stroke="#c4c4c4" stroke-width="1" />
<text transform="translate(511.40,370.80) scale(0.92,1)" x="0" y="0" font-size="9.4" fill="#e0e0e0" >3 Dec 08:00</text>
<line x1="572.20" y1="358.50" x2="572.20" y2="362.00" stroke="#c4c4c4" stroke-width="1" />
<text transform="translate(571.40,370.80) scale(0.92,1)" x="0" y="0" font-size="9.4" fill="#e0e0e0" >3 Dec 12:00</text>
<line x1="632.20" y1="358.50" x2="632.20" y2="362.00" stroke="#c4c4c4" stroke-width="1" />
<text transform="translate(631.40,370.80) scale(0.92,1)" x="0" y="0" font-size="9.4" fill="#e0e0e0" >3 Dec 16:00</text>
<line x1="692.20" y1="358.50" x2="692.20" y2="362.00" stroke="#c4c4c4" stroke-width="1" />
<text transform="translate(691.40,370.80) scale(0.92,1)" x="0" y="0" font-size="9.4" fill="#e0e0e0" >3 Dec 20:00</text>
<line x1="752.20" y1="358.50" x2="752.20" y2="362.00" stroke="#c4c4c4" stroke-width="1" />
<text transform="translate(751.40,370.80) scale(0.92,1)" x="0" y="0" font-size="9.4" fill="#e0e0e0" >4 Dec 00:00</text>
<line x1="812.20" y1="358.50" x2="812.20" y2="362.00" stroke="#c4c4c4" stroke-width="1" />
<text transform="translate(811.40,370.80) scale(0.92,1)" x="0" y="0" font-size="9.4" fill="#e0e0e0" >4 Dec 04:00</text>
<line x1="872.20" y1="358.50" x2="872.20" y2="362.00" stroke="#c4c4c4" stroke-width="1" />
<text transform="translate(871.40,370.80) scale(0.92,1)" x="0" y="0" font-size="9.4" fill="#e0e0e0" >4 Dec 08:00</text>
<line x1="932.20" y1="358.50" x2="932.20" y2="362.00" stroke="#c4c4c4" stroke-width="1" />
<text transform="translate(931.40,370.80) scale(0.92,1)" x="0" y="0" font-size="9.4" fill="#e0e0e0" >4 Dec 12:00</text>
<line x1="992.20" y1="358.50" x2="992.20" y2="362.00" stroke="#c4c4c4" stroke-width="1" />
<text transform="translate(991.40,370.80) scale(0.92,1)" x="0" y="0" font-size="9.4" fill="#e0e0e0" >4 Dec 16:00</text>
<line x1="1052.20" y1="358.50" x2="1052.20" y2="362.00" stroke="#c4c4c4" stroke-width="1" />
<text transform="translate(1051.40,370.80) scale(0.92,1)" x="0" y="0" font-size="9.4" fill="#e0e0e0" >4 Dec 20:00</text>
<line x1="1112.20" y1="358.50" x2="1112.20" y2="362.00" stroke="#c4c4c4" stroke-width="1" />
<text transform="translate(1111.40,370.80) scale(0.92,1)" x="0" y="0" font-size="9.4" fill="#e0e0e0" >5 Dec 00:00</text>
<line x1="1172.20" y1="358.50" x2="1172.20" y2="362.00" stroke="#c4c4c4" stroke-width="1" />
<text transform="translate(1171.40,370.80) scale(0.92,1)" x="0" y="0" font-size="9.4" fill="#e0e0e0" >5 Dec 04:00</text>
<g transform="translate(336.7,83)"><rect x="0.6" y="0.6" width="6.2" height="8.7" fill="#fbe0e0" stroke="#e04848" stroke-width="1.2"/><rect x="7.1" y="0.6" width="6.0" height="8.7" fill="#d6ebfc" stroke="#2f7fd0" stroke-width="1.2"/><path d="M1.8,2.6 H6 M1.8,5 H6 M1.8,7.4 H6" stroke="#e05050" stroke-width="1.1"/><path d="M7.9,2.6 H12 M7.9,5 H12 M7.9,7.4 H12" stroke="#2f7fd0" stroke-width="1.1"/></g>
<g transform="translate(356.2,83.2)"><path d="M0.6,0.6 H3.9 V4.4 H6 V9 H0.6 Z" fill="#fde2da" stroke="#e04040" stroke-width="1.2"/><rect x="5.2" y="0.4" width="3.8" height="2.2" fill="#e6e6e6"/><path d="M10.1,0.6 H13.4 V9 H8.2 V4.4 H10.1 Z" fill="#cfe6fc" stroke="#2f7fd0" stroke-width="1.2"/></g>
<text x="375.80" y="90.90" font-size="9.2" fill="#e4e4e4" textLength="190" lengthAdjust="spacingAndGlyphs" >GBPUSD, H1:  Great Britain Pound vs US Dollar</text>
<text transform="translate(1208.90,91.10) scale(0.94,1)" x="0" y="0" font-size="9.2" fill="#e4e4e4" text-anchor="end" >EA Black Dragon MT5 V13</text>
<g transform="translate(1220.8,86.6)"><path d="M-4,0.2 L-4,4 Q0,6.2 4,4 L4,0.2 Z" fill="#d4d4d4"/><path d="M-7.3,-0.2 L0,-3.6 L7.3,-0.2 L0,2 Z" fill="#e2e2e2"/><path d="M-6,0 L-6,5" stroke="#c8c8c8" stroke-width="1"/><circle cx="-6" cy="5.4" r="1.3" fill="#d0d0d0"/></g>
<rect x="341.90" y="101.70" width="679.30" height="56.10" fill="#a52a2a" />
<line x1="343.00" y1="101.70" x2="343.00" y2="157.80" stroke="#7e1414" stroke-width="2" />
<line x1="341.90" y1="102.30" x2="1021.20" y2="102.30" stroke="#7e1414" stroke-width="1.2" />
<line x1="341.90" y1="156.90" x2="1021.20" y2="156.90" stroke="#cf5a5a" stroke-width="1.8" />
<line x1="1020.40" y1="101.70" x2="1020.40" y2="157.80" stroke="#cf5a5a" stroke-width="1.6" />
<text x="353.10" y="124.00" font-size="15.4" fill="#f4e9e9" textLength="105" lengthAdjust="spacingAndGlyphs" >Black Dragon</text>
<text x="347.80" y="149.90" font-size="14.6" fill="#f4e9e9" textLength="101" lengthAdjust="spacingAndGlyphs" >Buy profit: 0</text>
<text x="534.60" y="149.90" font-size="14.6" fill="#f4e9e9" textLength="101" lengthAdjust="spacingAndGlyphs" >Sell profit: 0</text>
<text x="721.90" y="149.90" font-size="14.6" fill="#f4e9e9" textLength="111.2" lengthAdjust="spacingAndGlyphs" >Daily profit: 0</text>
<rect x="473.10" y="106.25" width="75.00" height="23.50" fill="#008000" />
<line x1="473.10" y1="106.85" x2="548.10" y2="106.85" stroke="#2aa52a" stroke-width="1.2" />
<line x1="473.70" y1="106.25" x2="473.70" y2="129.75" stroke="#2aa52a" stroke-width="1.2" />
<line x1="473.10" y1="129.15" x2="548.10" y2="129.15" stroke="#005a00" stroke-width="1.2" />
<line x1="547.50" y1="106.25" x2="547.50" y2="129.75" stroke="#005a00" stroke-width="1.2" />
<text x="484.40" y="123.55" font-size="14" fill="#f4f0f0" textLength="53.1" lengthAdjust="spacingAndGlyphs" >BUY ON</text>
<rect x="548.10" y="106.25" width="94.15" height="23.50" fill="#008000" />
<line x1="548.10" y1="106.85" x2="642.25" y2="106.85" stroke="#2aa52a" stroke-width="1.2" />
<line x1="548.70" y1="106.25" x2="548.70" y2="129.75" stroke="#2aa52a" stroke-width="1.2" />
<line x1="548.10" y1="129.15" x2="642.25" y2="129.15" stroke="#005a00" stroke-width="1.2" />
<line x1="641.65" y1="106.25" x2="641.65" y2="129.75" stroke="#005a00" stroke-width="1.2" />
<text x="555.60" y="123.55" font-size="14" fill="#f4f0f0" textLength="79.4" lengthAdjust="spacingAndGlyphs" >CLOSE BUY</text>
<rect x="642.25" y="106.25" width="93.35" height="23.50" fill="#008000" />
<line x1="642.25" y1="106.85" x2="735.60" y2="106.85" stroke="#2aa52a" stroke-width="1.2" />
<line x1="642.85" y1="106.25" x2="642.85" y2="129.75" stroke="#2aa52a" stroke-width="1.2" />
<line x1="642.25" y1="129.15" x2="735.60" y2="129.15" stroke="#005a00" stroke-width="1.2" />
<line x1="735.00" y1="106.25" x2="735.00" y2="129.75" stroke="#005a00" stroke-width="1.2" />
<text x="650.00" y="123.55" font-size="14" fill="#f4f0f0" textLength="77.7" lengthAdjust="spacingAndGlyphs" >PAUSE OFF</text>
<rect x="747.75" y="106.25" width="75.35" height="23.50" fill="#ffa500" />
<line x1="747.75" y1="106.85" x2="823.10" y2="106.85" stroke="#ffc640" stroke-width="1.2" />
<line x1="748.35" y1="106.25" x2="748.35" y2="129.75" stroke="#ffc640" stroke-width="1.2" />
<line x1="747.75" y1="129.15" x2="823.10" y2="129.15" stroke="#d08400" stroke-width="1.2" />
<line x1="822.50" y1="106.25" x2="822.50" y2="129.75" stroke="#d08400" stroke-width="1.2" />
<text x="755.60" y="123.55" font-size="14" fill="#f4f0f0" textLength="57.5" lengthAdjust="spacingAndGlyphs" >SELL ON</text>
<rect x="823.10" y="106.25" width="93.15" height="23.50" fill="#ffa500" />
<line x1="823.10" y1="106.85" x2="916.25" y2="106.85" stroke="#ffc640" stroke-width="1.2" />
<line x1="823.70" y1="106.25" x2="823.70" y2="129.75" stroke="#ffc640" stroke-width="1.2" />
<line x1="823.10" y1="129.15" x2="916.25" y2="129.15" stroke="#d08400" stroke-width="1.2" />
<line x1="915.65" y1="106.25" x2="915.65" y2="129.75" stroke="#d08400" stroke-width="1.2" />
<text x="827.50" y="123.55" font-size="14" fill="#f4f0f0" textLength="84.4" lengthAdjust="spacingAndGlyphs" >CLOSE SELL</text>
<rect x="916.25" y="106.25" width="93.95" height="23.50" fill="#ffa500" />
<line x1="916.25" y1="106.85" x2="1010.20" y2="106.85" stroke="#ffc640" stroke-width="1.2" />
<line x1="916.85" y1="106.25" x2="916.85" y2="129.75" stroke="#ffc640" stroke-width="1.2" />
<line x1="916.25" y1="129.15" x2="1010.20" y2="129.15" stroke="#d08400" stroke-width="1.2" />
<line x1="1009.60" y1="106.25" x2="1009.60" y2="129.75" stroke="#d08400" stroke-width="1.2" />
<text x="924.40" y="123.55" font-size="14" fill="#f4f0f0" textLength="77.6" lengthAdjust="spacingAndGlyphs" >PAUSE OFF</text>
<rect x="916.50" y="133.50" width="93.70" height="20.30" fill="#9400d3" />
<line x1="916.50" y1="134.10" x2="1010.20" y2="134.10" stroke="#b040f0" stroke-width="1.2" />
<line x1="917.10" y1="133.50" x2="917.10" y2="153.80" stroke="#b040f0" stroke-width="1.2" />
<line x1="916.50" y1="153.20" x2="1010.20" y2="153.20" stroke="#7000a8" stroke-width="1.2" />
<line x1="1009.60" y1="133.50" x2="1009.60" y2="153.80" stroke="#7000a8" stroke-width="1.2" />
<text x="922.90" y="147.10" font-size="14.2" fill="#f4f0f0" textLength="81.2" lengthAdjust="spacingAndGlyphs" >NEW CYCLE</text>
<rect x="337.00" y="330.20" width="75.30" height="23.40" fill="#008000" />
<line x1="337.00" y1="330.80" x2="412.30" y2="330.80" stroke="#2aa52a" stroke-width="1.2" />
<line x1="337.60" y1="330.20" x2="337.60" y2="353.60" stroke="#2aa52a" stroke-width="1.2" />
<line x1="337.00" y1="353.00" x2="412.30" y2="353.00" stroke="#005a00" stroke-width="1.2" />
<line x1="411.70" y1="330.20" x2="411.70" y2="353.60" stroke="#005a00" stroke-width="1.2" />
<text x="374.65" y="348.60" font-size="14" fill="#f4f0f0" text-anchor="middle" letter-spacing="0.5" >Open Buy</text>
<rect x="412.30" y="330.20" width="45.80" height="23.40" fill="#ffffff" />
<text x="434.80" y="348.60" font-size="14" fill="#1e1e1e" text-anchor="middle" letter-spacing="0.3" stroke="#1e1e1e" stroke-width="0.12" >0.01</text>
<rect x="458.10" y="330.20" width="75.90" height="23.40" fill="#ffa500" />
<line x1="458.10" y1="330.80" x2="534.00" y2="330.80" stroke="#ffc640" stroke-width="1.2" />
<line x1="458.70" y1="330.20" x2="458.70" y2="353.60" stroke="#ffc640" stroke-width="1.2" />
<line x1="458.10" y1="353.00" x2="534.00" y2="353.00" stroke="#d08400" stroke-width="1.2" />
<line x1="533.40" y1="330.20" x2="533.40" y2="353.60" stroke="#d08400" stroke-width="1.2" />
<text x="496.05" y="348.60" font-size="14" fill="#f4f0f0" text-anchor="middle" letter-spacing="0.2" >Open Sell</text>
<rect x="330.00" y="378.60" width="950.00" height="22.40" fill="#f0f0f0" />
<line x1="330.60" y1="378.60" x2="330.60" y2="397.60" stroke="#a0a0a0" stroke-width="1.2" />
<text x="344.20" y="392.30" font-size="11.7" fill="#8a8a8a" textLength="57.3" lengthAdjust="spacingAndGlyphs" >GBPUSD,H1</text>
<text x="423.80" y="392.30" font-size="11.7" fill="#8a8a8a" textLength="56.1" lengthAdjust="spacingAndGlyphs" >EURUSD,H1</text>
<text x="503.70" y="392.30" font-size="11.7" fill="#8a8a8a" textLength="56.3" lengthAdjust="spacingAndGlyphs" >EURUSD,H1</text>
<text x="582.60" y="392.30" font-size="11.7" fill="#8a8a8a" textLength="58.1" lengthAdjust="spacingAndGlyphs" >EURUSD,M5</text>
<text x="662.40" y="392.30" font-size="11.7" fill="#8a8a8a" textLength="61.0" lengthAdjust="spacingAndGlyphs" >USDCHF,M5</text>
<line x1="412.70" y1="381.50" x2="412.70" y2="393.50" stroke="#707070" stroke-width="1.2" />
<line x1="492.50" y1="381.50" x2="492.50" y2="393.50" stroke="#707070" stroke-width="1.2" />
<line x1="571.70" y1="381.50" x2="571.70" y2="393.50" stroke="#707070" stroke-width="1.2" />
<line x1="651.70" y1="381.50" x2="651.70" y2="393.50" stroke="#707070" stroke-width="1.2" />
<rect x="736.30" y="378.40" width="77.50" height="17.00" fill="#ffffff" stroke="#3a3a3a" stroke-width="1.1"/>
<rect x="736.90" y="377.40" width="76.30" height="1.60" fill="#f0f0f0" />
<text x="746.30" y="392.30" font-size="11.7" fill="#1e1e1e" textLength="57.3" lengthAdjust="spacingAndGlyphs" >GBPUSD,H1</text>
<path d="M1249,385 L1246,388.5 L1249,392 Z" fill="#c0c0c0"/>
<path d="M1265,385 L1268,388.5 L1265,392 Z" fill="#a0a0a0"/>
<rect x="0.00" y="401.00" width="1280.00" height="1.60" fill="#dcdcdc" />
<rect x="0.00" y="402.60" width="1280.00" height="242.40" fill="#ffffff" />
<rect x="0.00" y="402.60" width="15.00" height="242.40" fill="#bfcddb" />
<path d="M4.30,409.30 L10.90,415.90 M10.90,409.30 L4.30,415.90" stroke="#1a1a1a" stroke-width="1.3"/>
<defs><clipPath id="stc"><rect x="0" y="402.6" width="15" height="242.4"/></clipPath></defs><g clip-path="url(#stc)"><text transform="translate(11.8,667) rotate(-90)" font-size="11.3" fill="#303030" x="0" y="0" textLength="75.5" lengthAdjust="spacingAndGlyphs">Strategy Tester</text></g>
<defs><clipPath id="tc"><rect x="17" y="402.6" width="1248" height="242.4"/></clipPath></defs><g clip-path="url(#tc)">
<text transform="translate(19.80,416.00) scale(0.932,1)" x="0" y="0" font-size="11.8" fill="#1b1b1b" >History Quality</text>
<text transform="translate(414.30,416.00) scale(0.932,1)" x="0" y="0" font-size="11.8" fill="#1b1b1b" text-anchor="end" letter-spacing="-0.483" >100%</text>
<rect x="17.00" y="420.40" width="1246.80" height="17.80" fill="#ebebeb" />
<text transform="translate(19.80,433.80) scale(0.932,1)" x="0" y="0" font-size="11.8" fill="#1b1b1b" >Bars</text>
<text transform="translate(414.30,433.80) scale(0.932,1)" x="0" y="0" font-size="11.8" fill="#1b1b1b" text-anchor="end" letter-spacing="-0.483" >1907</text>
<text transform="translate(441.00,433.80) scale(0.932,1)" x="0" y="0" font-size="11.8" fill="#1b1b1b" >Ticks</text>
<text transform="translate(834.80,433.80) scale(0.932,1)" x="0" y="0" font-size="11.8" fill="#1b1b1b" text-anchor="end" letter-spacing="-0.483" >2774727</text>
<text transform="translate(861.50,433.80) scale(0.932,1)" x="0" y="0" font-size="11.8" fill="#1b1b1b" >Symbols</text>
<text transform="translate(1260.00,433.80) scale(0.932,1)" x="0" y="0" font-size="11.8" fill="#1b1b1b" text-anchor="end" letter-spacing="-0.483" >1</text>
<text transform="translate(19.80,451.60) scale(0.932,1)" x="0" y="0" font-size="11.8" fill="#1b1b1b" >Initial Deposit</text>
<text transform="translate(414.30,451.60) scale(0.932,1)" x="0" y="0" font-size="11.8" fill="#1b1b1b" text-anchor="end" letter-spacing="-0.483" >5 000.00</text>
<rect x="17.00" y="456.00" width="1246.80" height="17.80" fill="#ebebeb" />
<text transform="translate(19.80,469.40) scale(0.932,1)" x="0" y="0" font-size="11.8" fill="#1b1b1b" >Total Net Profit</text>
<text transform="translate(414.30,469.40) scale(0.932,1)" x="0" y="0" font-size="11.8" fill="#1b1b1b" text-anchor="end" letter-spacing="-0.483" >6 191.02</text>
<text transform="translate(441.00,469.40) scale(0.932,1)" x="0" y="0" font-size="11.8" fill="#1b1b1b" >Balance Drawdown Absolute</text>
<text transform="translate(834.80,469.40) scale(0.932,1)" x="0" y="0" font-size="11.8" fill="#1b1b1b" text-anchor="end" letter-spacing="-0.483" >1.02</text>
<text transform="translate(861.50,469.40) scale(0.932,1)" x="0" y="0" font-size="11.8" fill="#1b1b1b" >Equity Drawdown Absolute</text>
<text transform="translate(1260.00,469.40) scale(0.932,1)" x="0" y="0" font-size="11.8" fill="#1b1b1b" text-anchor="end" letter-spacing="-0.483" >7 738.75</text>
<text transform="translate(19.80,487.20) scale(0.932,1)" x="0" y="0" font-size="11.8" fill="#1b1b1b" >Gross Profit</text>
<text transform="translate(414.30,487.20) scale(0.932,1)" x="0" y="0" font-size="11.8" fill="#1b1b1b" text-anchor="end" letter-spacing="-0.483" >22 674.13</text>
<text transform="translate(441.00,487.20) scale(0.932,1)" x="0" y="0" font-size="11.8" fill="#1b1b1b" >Balance Drawdown Maximal</text>
<text transform="translate(834.80,487.20) scale(0.932,1)" x="0" y="0" font-size="11.8" fill="#1b1b1b" text-anchor="end" letter-spacing="-0.483" >3 538.39 (32.59%)</text>
<text transform="translate(861.50,487.20) scale(0.932,1)" x="0" y="0" font-size="11.8" fill="#1b1b1b" >Equity Drawdown Maximal</text>
<text transform="translate(1260.00,487.20) scale(0.932,1)" x="0" y="0" font-size="11.8" fill="#1b1b1b" text-anchor="end" letter-spacing="-0.483" >13 100.31 (126.43%)</text>
<rect x="17.00" y="491.60" width="1246.80" height="17.80" fill="#ebebeb" />
<text transform="translate(19.80,505.00) scale(0.932,1)" x="0" y="0" font-size="11.8" fill="#1b1b1b" >Gross Loss</text>
<text transform="translate(414.30,505.00) scale(0.932,1)" x="0" y="0" font-size="11.8" fill="#1b1b1b" text-anchor="end" letter-spacing="-0.483" >-16 483.11</text>
<text transform="translate(441.00,505.00) scale(0.932,1)" x="0" y="0" font-size="11.8" fill="#1b1b1b" >Balance Drawdown Relative</text>
<text transform="translate(834.80,505.00) scale(0.932,1)" x="0" y="0" font-size="11.8" fill="#1b1b1b" text-anchor="end" letter-spacing="-0.483" >32.59% (3 538.39)</text>
<text transform="translate(861.50,505.00) scale(0.932,1)" x="0" y="0" font-size="11.8" fill="#1b1b1b" >Equity Drawdown Relative</text>
<text transform="translate(1260.00,505.00) scale(0.932,1)" x="0" y="0" font-size="11.8" fill="#1b1b1b" text-anchor="end" letter-spacing="-0.483" >126.43% (13 100.31)</text>
<rect x="17.00" y="527.20" width="1246.80" height="17.80" fill="#ebebeb" />
<text transform="translate(19.80,540.60) scale(0.932,1)" x="0" y="0" font-size="11.8" fill="#1b1b1b" >Profit Factor</text>
<text transform="translate(414.30,540.60) scale(0.932,1)" x="0" y="0" font-size="11.8" fill="#1b1b1b" text-anchor="end" letter-spacing="-0.483" >1.38</text>
<text transform="translate(441.00,540.60) scale(0.932,1)" x="0" y="0" font-size="11.8" fill="#1b1b1b" >Expected Payoff</text>
<text transform="translate(834.80,540.60) scale(0.932,1)" x="0" y="0" font-size="11.8" fill="#1b1b1b" text-anchor="end" letter-spacing="-0.483" >3.23</text>
<text transform="translate(861.50,540.60) scale(0.932,1)" x="0" y="0" font-size="11.8" fill="#1b1b1b" >Margin Level</text>
<text transform="translate(1260.00,540.60) scale(0.932,1)" x="0" y="0" font-size="11.8" fill="#1b1b1b" text-anchor="end" letter-spacing="-0.483" >2205.08%</text>
<text transform="translate(19.80,558.40) scale(0.932,1)" x="0" y="0" font-size="11.8" fill="#1b1b1b" >Recovery Factor</text>
<text transform="translate(414.30,558.40) scale(0.932,1)" x="0" y="0" font-size="11.8" fill="#1b1b1b" text-anchor="end" letter-spacing="-0.483" >0.47</text>
<text transform="translate(441.00,558.40) scale(0.932,1)" x="0" y="0" font-size="11.8" fill="#1b1b1b" >Sharpe Ratio</text>
<text transform="translate(834.80,558.40) scale(0.932,1)" x="0" y="0" font-size="11.8" fill="#1b1b1b" text-anchor="end" letter-spacing="-0.483" >0.94</text>
<text transform="translate(861.50,558.40) scale(0.932,1)" x="0" y="0" font-size="11.8" fill="#1b1b1b" >Z-Score</text>
<text transform="translate(1260.00,558.40) scale(0.932,1)" x="0" y="0" font-size="11.8" fill="#1b1b1b" text-anchor="end" letter-spacing="-0.483" >-10.66 (99.74%)</text>
<rect x="17.00" y="562.80" width="1246.80" height="17.80" fill="#ebebeb" />
<text transform="translate(19.80,576.20) scale(0.932,1)" x="0" y="0" font-size="11.8" fill="#1b1b1b" >AHPR</text>
<text transform="translate(414.30,576.20) scale(0.932,1)" x="0" y="0" font-size="11.8" fill="#1b1b1b" text-anchor="end" letter-spacing="-0.483" >1.0005 (0.05%)</text>
<text transform="translate(441.00,576.20) scale(0.932,1)" x="0" y="0" font-size="11.8" fill="#1b1b1b" >LR Correlation</text>
<text transform="translate(834.80,576.20) scale(0.932,1)" x="0" y="0" font-size="11.8" fill="#1b1b1b" text-anchor="end" letter-spacing="-0.483" >1.00</text>
<text transform="translate(861.50,576.20) scale(0.932,1)" x="0" y="0" font-size="11.8" fill="#1b1b1b" >OnTester result</text>
<text transform="translate(1260.00,576.20) scale(0.932,1)" x="0" y="0" font-size="11.8" fill="#1b1b1b" text-anchor="end" letter-spacing="-0.483" >0</text>
<text transform="translate(19.80,594.00) scale(0.932,1)" x="0" y="0" font-size="11.8" fill="#1b1b1b" >GHPR</text>
<text transform="translate(414.30,594.00) scale(0.932,1)" x="0" y="0" font-size="11.8" fill="#1b1b1b" text-anchor="end" letter-spacing="-0.483" >1.0004 (0.04%)</text>
<text transform="translate(441.00,594.00) scale(0.932,1)" x="0" y="0" font-size="11.8" fill="#1b1b1b" >LR Standard Error</text>
<text transform="translate(834.80,594.00) scale(0.932,1)" x="0" y="0" font-size="11.8" fill="#1b1b1b" text-anchor="end" letter-spacing="-0.483" >172.53</text>
<rect x="17.00" y="598.40" width="1246.80" height="17.80" fill="#ebebeb" />
<text transform="translate(19.80,629.60) scale(0.932,1)" x="0" y="0" font-size="11.8" fill="#1b1b1b" >Total Trades</text>
<text transform="translate(414.30,629.60) scale(0.932,1)" x="0" y="0" font-size="11.8" fill="#1b1b1b" text-anchor="end" letter-spacing="-0.483" >1917</text>
<text transform="translate(441.00,629.60) scale(0.932,1)" x="0" y="0" font-size="11.8" fill="#1b1b1b" >Short Trades (won %)</text>
<text transform="translate(834.80,629.60) scale(0.932,1)" x="0" y="0" font-size="11.8" fill="#1b1b1b" text-anchor="end" letter-spacing="-0.483" >574 (82.06%)</text>
<text transform="translate(861.50,629.60) scale(0.932,1)" x="0" y="0" font-size="11.8" fill="#1b1b1b" >Long Trades (won %)</text>
<text transform="translate(1260.00,629.60) scale(0.932,1)" x="0" y="0" font-size="11.8" fill="#1b1b1b" text-anchor="end" letter-spacing="-0.483" >1343 (87.19%)</text>
<rect x="17.00" y="634.00" width="1246.80" height="17.80" fill="#ebebeb" />
<text transform="translate(19.80,647.40) scale(0.932,1)" x="0" y="0" font-size="11.8" fill="#1b1b1b" >Total Deals</text>
<text transform="translate(414.30,647.40) scale(0.932,1)" x="0" y="0" font-size="11.8" fill="#1b1b1b" text-anchor="end" letter-spacing="-0.483" >3834</text>
<text transform="translate(441.00,647.40) scale(0.932,1)" x="0" y="0" font-size="11.8" fill="#1b1b1b" >Profit Trades (% of total)</text>
<text transform="translate(834.80,647.40) scale(0.932,1)" x="0" y="0" font-size="11.8" fill="#1b1b1b" text-anchor="end" letter-spacing="-0.483" >1642 (85.65%)</text>
<text transform="translate(861.50,647.40) scale(0.932,1)" x="0" y="0" font-size="11.8" fill="#1b1b1b" >Loss Trades (% of total)</text>
<text transform="translate(1260.00,647.40) scale(0.932,1)" x="0" y="0" font-size="11.8" fill="#1b1b1b" text-anchor="end" letter-spacing="-0.483" >275 (14.35%)</text>
</g>
<rect x="439.40" y="404.40" width="822.40" height="14.20" fill="#cccccc" stroke="#9a9a9a" stroke-width="1.2"/>
<rect x="440.00" y="405.00" width="780.40" height="13.00" fill="#98fa84" />
<rect x="1265.00" y="402.60" width="15.00" height="242.40" fill="#f0f0f0" />
<rect x="1265.50" y="418.80" width="13.50" height="35.00" fill="#cdcdcd" />
<path d="M1268.60,413.40 L1272.20,409.80 L1275.80,413.40" fill="none" stroke="#5a5a5a" stroke-width="1.7"/>
<path d="M1268.60,634.00 L1272.20,637.60 L1275.80,634.00" fill="none" stroke="#5a5a5a" stroke-width="1.7"/>
<rect x="194.50" y="644.00" width="58.50" height="1.20" fill="#ffffff" />
</svg></body></html>
